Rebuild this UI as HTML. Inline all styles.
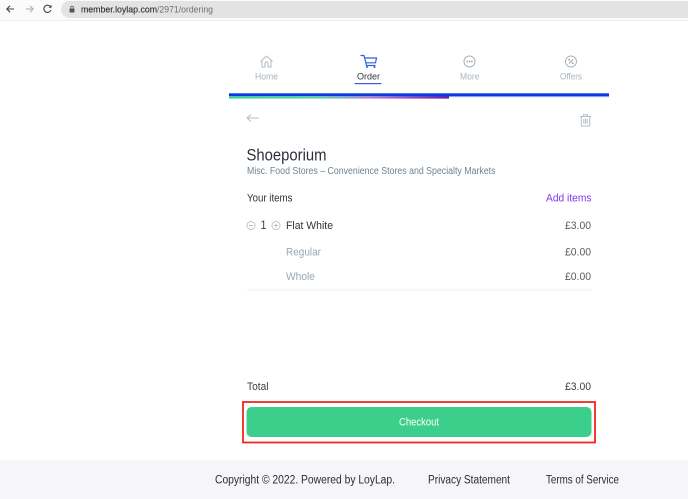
<!DOCTYPE html>
<html><head><meta charset="utf-8"><style>
html,body{margin:0;padding:0;background:#fff;width:688px;height:499px;overflow:hidden}
svg{display:block}
text{font-family:"Liberation Sans",sans-serif}
</style></head><body>
<svg width="688" height="499" viewBox="0 0 688 499" xmlns="http://www.w3.org/2000/svg">
<defs><linearGradient id="g" x1="0" x2="1" y1="0" y2="0"><stop offset="0" stop-color="#3ccf9a"/><stop offset=".4" stop-color="#5fcfb0"/><stop offset=".65" stop-color="#a884dc"/><stop offset="1" stop-color="#5a1fb0"/></linearGradient></defs>
<rect width="688" height="499" fill="#fff"/>
<rect x="0" y="0" width="688" height="20" fill="#fbfbfb"/>
<rect x="0" y="20" width="688" height="1" fill="#ececec"/>
<rect x="61" y="1" width="660" height="17" rx="8.5" fill="#e3e3e3"/>
<path d="M14 9H7M10 5.8 6.8 9l3.2 3.2" fill="none" stroke="#444" stroke-width="1.1"/>
<path d="M33 9H26M30 5.8 33.2 9 30 12.2" fill="none" stroke="#aaa" stroke-width="1"/>
<path d="M50.6 7a3.600 3.600 0 1 0 .3 3" fill="none" stroke="#444" stroke-width="1.100"/><path d="M51.500 4.800v3h-3z" fill="#444"/>
<rect x="69.500" y="8.500" width="5" height="4" rx=".6" fill="#555"/><path d="M70.700 8.500V7.400a1.300 1.300 0 0 1 2.600 0v1.100" fill="none" stroke="#555" stroke-width=".8"/>
<text x="81" y="12.500" font-size="9.200" fill="#2b2b2b" stroke="#2b2b2b" stroke-width=".12" textLength="76" lengthAdjust="spacingAndGlyphs">member.loylap.com</text>
<text x="157" y="12.500" font-size="9.200" fill="#707070" textLength="56" lengthAdjust="spacingAndGlyphs">/2971/ordering</text>

<path d="M260.500 61.500 266.500 56l6 5.500M262 60.500V67h3v-3.500a1.500 1.500 0 0 1 3 0V67h3v-6.500" fill="none" stroke="#b0bac3" stroke-width="1"/>
<text x="255" y="79.500" font-size="9.500" fill="#a9b3bc" textLength="23" lengthAdjust="spacingAndGlyphs">Home</text>
<path d="M360.500 55.500h3.500l2.500 10h9M364.500 58h12l-1 4.800H365.800" fill="none" stroke="#2f5fe8" stroke-width="1.200"/><circle cx="367" cy="67" r="1" fill="#2f5fe8"/><circle cx="374.500" cy="67" r="1" fill="#2f5fe8"/>
<text x="357" y="79.500" font-size="9.500" fill="#33383e" textLength="23" lengthAdjust="spacingAndGlyphs">Order</text>
<rect x="354.500" y="83" width="27" height="1.200" fill="#2f5fe8"/>
<circle cx="469.500" cy="61.500" r="5.500" fill="none" stroke="#a9b3bc" stroke-width="1"/><path d="M466.500 61.500h6" stroke="#8f9ba6" stroke-width="1.400" stroke-dasharray="1.400 .9"/>
<text x="460" y="79.500" font-size="9.500" fill="#a9b3bc" textLength="19.500" lengthAdjust="spacingAndGlyphs">More</text>
<circle cx="571" cy="61.500" r="5.500" fill="none" stroke="#a9b3bc" stroke-width="1"/><path d="M573 59.500 569 63.500" stroke="#8f9ba6" stroke-width=".9"/><circle cx="569.200" cy="59.800" r=".9" fill="#8f9ba6"/><circle cx="572.800" cy="63.200" r=".9" fill="#8f9ba6"/>
<text x="560" y="79.500" font-size="9.500" fill="#a9b3bc" textLength="22" lengthAdjust="spacingAndGlyphs">Offers</text>

<rect x="229" y="96" width="380" height="1.200" fill="#8aa4f2"/>
<rect x="229" y="93.300" width="380" height="2.700" fill="#0a3ae0"/>
<rect x="229" y="96" width="220" height="2.600" fill="url(#g)"/>

<path d="M258.500 118h-11.500M251 114.500 247 118l4 3.500" fill="none" stroke="#b4bec6" stroke-width="1"/>
<path d="M580 116.500h11M583.500 116.500v-1.800h4v1.800M581.300 116.500V126h8.400v-9.500M583.800 118.800v5M585.500 118.800v5M587.200 118.800v5" fill="none" stroke="#b4bec6" stroke-width="1"/>

<text x="246.500" y="160.500" font-size="16.500" fill="#2b3038" textLength="80" lengthAdjust="spacingAndGlyphs">Shoeporium</text>
<text x="247" y="174" font-size="10" fill="#71828f" textLength="248.500" lengthAdjust="spacingAndGlyphs">Misc. Food Stores – Convenience Stores and Specialty Markets</text>

<text x="247" y="201.500" font-size="11" fill="#2f343a" textLength="45.500" lengthAdjust="spacingAndGlyphs">Your items</text>
<text x="546" y="201.500" font-size="11" fill="#7d3ce8" textLength="45.500" lengthAdjust="spacingAndGlyphs">Add items</text>

<circle cx="251" cy="225.500" r="4" fill="none" stroke="#bac3cb" stroke-width=".9"/><path d="M249 225.500h4" stroke="#a9b3bc" stroke-width=".8"/>
<text x="260.500" y="229" font-size="11.500" fill="#3a4046" textLength="6" lengthAdjust="spacingAndGlyphs">1</text>
<circle cx="276" cy="225.500" r="4" fill="none" stroke="#bac3cb" stroke-width=".9"/><path d="M274 225.500h4M276 223.500v4" stroke="#a9b3bc" stroke-width=".8"/>
<text x="286" y="229" font-size="11" fill="#2f343a" textLength="47" lengthAdjust="spacingAndGlyphs">Flat White</text>
<text x="565" y="229" font-size="11" fill="#555b62" textLength="26" lengthAdjust="spacingAndGlyphs">£3.00</text>

<text x="286" y="255.500" font-size="11" fill="#9aa8b4" textLength="35" lengthAdjust="spacingAndGlyphs">Regular</text>
<text x="565" y="255.500" font-size="11" fill="#555b62" textLength="26" lengthAdjust="spacingAndGlyphs">£0.00</text>
<text x="286" y="280" font-size="11" fill="#9aa8b4" textLength="29" lengthAdjust="spacingAndGlyphs">Whole</text>
<text x="565" y="280" font-size="11" fill="#555b62" textLength="26" lengthAdjust="spacingAndGlyphs">£0.00</text>
<rect x="247" y="289.500" width="344" height="1" fill="#eeeff1"/>

<text x="247" y="390" font-size="11" fill="#3a4046" textLength="21.500" lengthAdjust="spacingAndGlyphs">Total</text>
<text x="565" y="390" font-size="11" fill="#3a4046" textLength="26" lengthAdjust="spacingAndGlyphs">£3.00</text>

<rect x="243" y="402" width="352" height="40.500" fill="none" stroke="#f0271f" stroke-width="1.800"/>
<rect x="246.500" y="407" width="345" height="30" rx="5" fill="#3ccf8b"/>
<text x="399" y="425.700" font-size="11" fill="#fff" textLength="40" lengthAdjust="spacingAndGlyphs">Checkout</text>

<rect x="0" y="460" width="688" height="39" fill="#f5f5fa"/>
<text x="215" y="483.500" font-size="11.500" fill="#2a2e34" textLength="180" lengthAdjust="spacingAndGlyphs">Copyright © 2022. Powered by LoyLap.</text>
<text x="428" y="483.500" font-size="11.500" fill="#2a2e34" textLength="82" lengthAdjust="spacingAndGlyphs">Privacy Statement</text>
<text x="546" y="483.500" font-size="11.500" fill="#2a2e34" textLength="73" lengthAdjust="spacingAndGlyphs">Terms of Service</text>
</svg>
</body></html>
